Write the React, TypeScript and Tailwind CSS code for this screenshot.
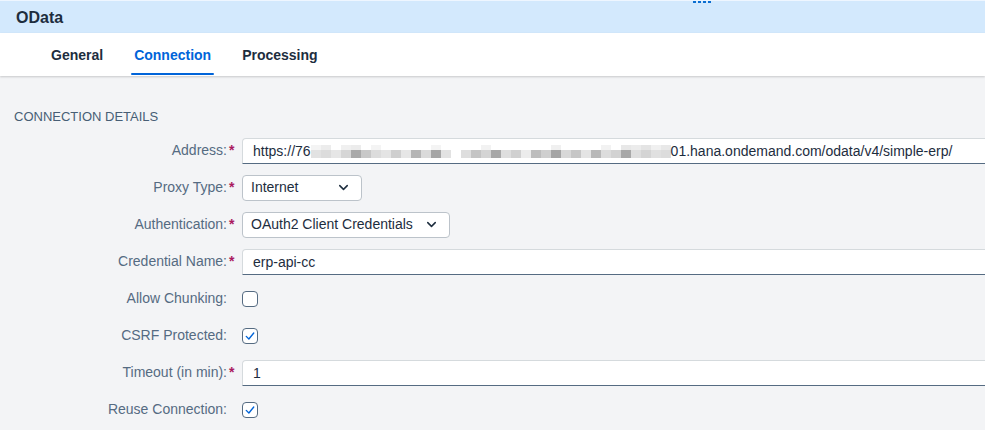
import { ChevronDown } from 'lucide-react'

const blur = [
  ['#f4f4f4', '#e2e2e2'], ['#ececec', '#dcdcdc'], ['#ffffff', '#e6e6e6'], ['#f0f0f0', '#d6d6d6'],
  ['#ececec', '#a9a9a9'], ['#ffffff', '#c8c8c8'], ['#f4f4f4', '#dcdcdc'], ['#ffffff', '#e4e4e4'],
  ['#ffffff', '#cfcfcf'], ['#ffffff', '#e6e6e6'], ['#ffffff', '#b5b5b5'], ['#ffffff', '#dadada'],
  ['#f4f4f4', '#a6a6a6'], ['#ffffff', '#e2e2e2'], ['#ffffff', '#ffffff'], ['#ffffff', '#dedede'],
  ['#ffffff', '#c4c4c4'], ['#f2f2f2', '#d4d4d4'], ['#ffffff', '#a8a8a8'], ['#ffffff', '#dedede'],
  ['#ffffff', '#d0d0d0'], ['#ffffff', '#ececec'], ['#ffffff', '#bdbdbd'], ['#ffffff', '#cfcfcf'],
  ['#f0f0f0', '#a4a4a4'], ['#ffffff', '#d8d8d8'], ['#ffffff', '#c6c6c6'], ['#ffffff', '#e4e4e4'],
  ['#ffffff', '#b8b8b8'], ['#f2f2f2', '#dcdcdc'], ['#ffffff', '#d2d2d2'], ['#e8e8e8', '#a8a8a8'],
  ['#ececec', '#dedede'], ['#e4e4e4', '#d4d4d4'], ['#f0f0f0', '#e0e0e0'], ['#e8e8e8', '#dcdcdc'],
]

function Label({ text, required }: { text: string; required?: boolean }) {
  return (
    <div className="flex items-center shrink-0">
      <span className="w-[227px] text-right text-[14px] text-[#556b82]">{text}</span>
      <span className="w-[15px] pl-[2px] text-[14px] font-bold text-[#aa1a5f]">{required ? '*' : ''}</span>
    </div>
  )
}

function Input({ children }: { children: React.ReactNode }) {
  return (
    <div className="w-[760px] shrink-0 h-[26px] bg-white rounded-t-[4px] border border-[#d5dadd] border-b-[#556b82] flex items-center pl-[10px] pt-[2px] text-[14px] text-[#1d2d3e] whitespace-nowrap overflow-hidden">
      {children}
    </div>
  )
}

function Select({ value, width }: { value: string; width: string }) {
  return (
    <div className={`${width} h-[26px] bg-white rounded-[4px] border border-[#bcc3ca] flex items-center justify-between pl-[8px] pr-[10px] text-[14px] text-[#1d2d3e]`}>
      <span>{value}</span>
      <ChevronDown className="w-[15px] h-[15px] text-[#1d2d3e]" strokeWidth={2.4} />
    </div>
  )
}

function Checkbox({ checked }: { checked?: boolean }) {
  return (
    <div className="w-[16px] h-[16px] bg-white rounded-[4px] border border-[#556b82] flex items-center justify-center">
      {checked && (
        <svg viewBox="0 0 16 16" className="w-[12px] h-[12px]">
          <path d="M3 8.5 L6.5 12 L13 4" fill="none" stroke="#0064d9" strokeWidth="1.8" strokeLinecap="round" strokeLinejoin="round" />
        </svg>
      )}
    </div>
  )
}

function Row({ children }: { children: React.ReactNode }) {
  return <div className="flex items-center h-[37px]">{children}</div>
}

export default function App() {
  return (
    <div className="w-[985px] h-[430px] bg-[#f3f4f6] overflow-hidden font-['Liberation_Sans',Arial,sans-serif]">
      <div className="relative h-[33px] bg-[#d3e9fd] border-t border-[#eef6ff] flex items-center px-4 pt-[2px]">
        <span className="text-[16px] font-bold text-[#1d2d3e]">OData</span>
        <div className="absolute left-[693px] top-0 flex gap-[2px]">
          <span className="w-[3px] h-[2px] bg-[#0a6ed1]" />
          <span className="w-[3px] h-[2px] bg-[#0a6ed1]" />
          <span className="w-[3px] h-[2px] bg-[#0a6ed1]" />
          <span className="w-[3px] h-[2px] bg-[#0a6ed1]" />
        </div>
      </div>
      <div className="h-[43px] bg-white flex items-stretch pl-[48px] gap-[25px] shadow-[0_1px_2px_rgba(0,0,0,0.18)] relative">
        <div className="px-[3px] pt-[2px] flex items-center text-[14px] font-bold text-[#1d2d3e]">General</div>
        <div className="relative px-[3px] pt-[2px] flex items-center text-[14px] font-bold text-[#0064d9]">
          Connection
          <span className="absolute left-0 right-0 bottom-[1px] h-[2px] rounded-full bg-[#0064d9]" />
        </div>
        <div className="px-[3px] pt-[2px] flex items-center text-[14px] font-bold text-[#1d2d3e]">Processing</div>
      </div>

      <div className="pt-[33px]">
        <div className="pl-[14px] text-[13px] text-[#475e75] leading-[16px] mb-[7px]">CONNECTION DETAILS</div>

        <Row>
          <Label text="Address:" required />
          <Input>
            <span>https://76</span>
            <span className="flex mx-0">
              {blur.map((c, i) => (
                <span key={i} className="flex flex-col w-[10px]">
                  <span className="h-[5px]" style={{ backgroundColor: c[0] }} />
                  <span className="h-[8px]" style={{ backgroundColor: c[1] }} />
                </span>
              ))}
            </span>
            <span>01.hana.ondemand.com/odata/v4/simple-erp/</span>
          </Input>
        </Row>
        <Row>
          <Label text="Proxy Type:" required />
          <Select value="Internet" width="w-[120px]" />
        </Row>
        <Row>
          <Label text="Authentication:" required />
          <Select value="OAuth2 Client Credentials" width="w-[208px]" />
        </Row>
        <Row>
          <Label text="Credential Name:" required />
          <Input>erp-api-cc</Input>
        </Row>
        <Row>
          <Label text="Allow Chunking:" />
          <Checkbox />
        </Row>
        <Row>
          <Label text="CSRF Protected:" />
          <Checkbox checked />
        </Row>
        <Row>
          <Label text="Timeout (in min):" required />
          <Input>1</Input>
        </Row>
        <Row>
          <Label text="Reuse Connection:" />
          <Checkbox checked />
        </Row>
      </div>
    </div>
  )
}
